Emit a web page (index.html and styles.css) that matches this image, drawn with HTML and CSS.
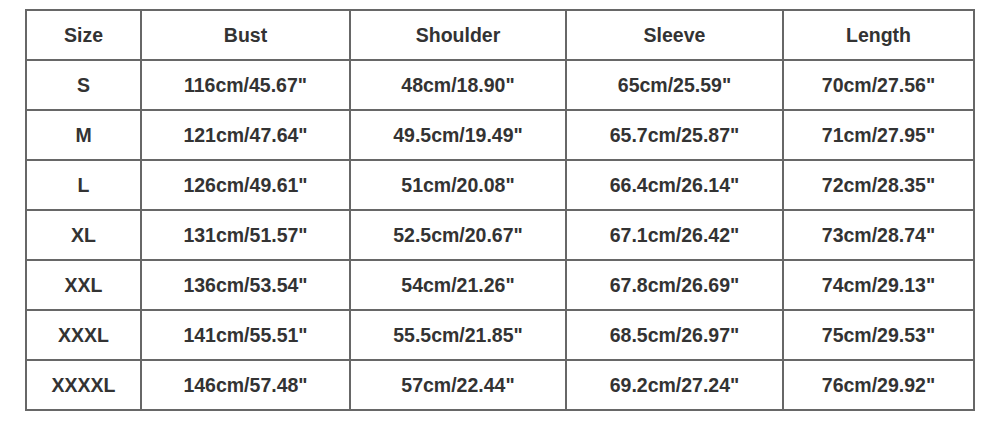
FILE: index.html
```html
<!DOCTYPE html>
<html>
<head>
<meta charset="utf-8">
<link rel="stylesheet" href="styles.css">
</head>
<body>
<div class="chart">
  <div class="cell">Size</div><div class="cell">Bust</div><div class="cell">Shoulder</div><div class="cell">Sleeve</div><div class="cell">Length</div>
  <div class="cell">S</div><div class="cell">116cm/45.67"</div><div class="cell">48cm/18.90"</div><div class="cell">65cm/25.59"</div><div class="cell">70cm/27.56"</div>
  <div class="cell">M</div><div class="cell">121cm/47.64"</div><div class="cell">49.5cm/19.49"</div><div class="cell">65.7cm/25.87"</div><div class="cell">71cm/27.95"</div>
  <div class="cell">L</div><div class="cell">126cm/49.61"</div><div class="cell">51cm/20.08"</div><div class="cell">66.4cm/26.14"</div><div class="cell">72cm/28.35"</div>
  <div class="cell">XL</div><div class="cell">131cm/51.57"</div><div class="cell">52.5cm/20.67"</div><div class="cell">67.1cm/26.42"</div><div class="cell">73cm/28.74"</div>
  <div class="cell">XXL</div><div class="cell">136cm/53.54"</div><div class="cell">54cm/21.26"</div><div class="cell">67.8cm/26.69"</div><div class="cell">74cm/29.13"</div>
  <div class="cell">XXXL</div><div class="cell">141cm/55.51"</div><div class="cell">55.5cm/21.85"</div><div class="cell">68.5cm/26.97"</div><div class="cell">75cm/29.53"</div>
  <div class="cell">XXXXL</div><div class="cell">146cm/57.48"</div><div class="cell">57cm/22.44"</div><div class="cell">69.2cm/27.24"</div><div class="cell">76cm/29.92"</div>
</div>
</body>
</html>
```
FILE: styles.css
```css
html, body {
  margin: 0;
  padding: 0;
  background: #ffffff;
}
body {
  padding: 9px 25px 0 25px;
}
.chart {
  display: grid;
  width: 946px;
  grid-template-columns: 113px 207px 214px 215px 189px;
  grid-auto-rows: 48px;
  gap: 2px;
  padding: 2px;
  background: #676767;
}
.cell {
  background: #ffffff;
  display: flex;
  align-items: center;
  justify-content: center;
  font-family: "Liberation Sans", Arial, sans-serif;
  font-weight: bold;
  font-size: 19.5px;
  color: #333333;
}
```
